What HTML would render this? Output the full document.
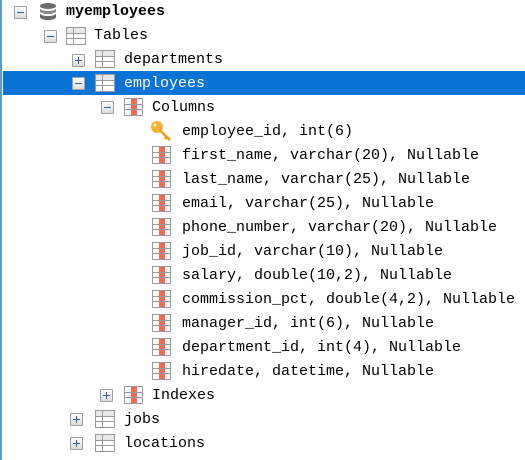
<!DOCTYPE html>
<html><head><meta charset="utf-8"><style>
body{margin:0;width:525px;height:460px;background:#fff;position:relative;overflow:hidden;font-family:"Liberation Mono",monospace;font-size:15px;color:#000}
.bar{position:absolute;left:0;top:0;width:2px;height:460px;background:#5b9bd5}
.sel{position:absolute;left:3px;top:71px;width:522px;height:24px;background:#0a74d6}
.r{position:absolute;height:24px;line-height:24px;white-space:pre}
.t{position:absolute;width:13px;height:13px;border:1px solid #a0a0a0;background:linear-gradient(#fdfdfd,#dcdcdc);box-sizing:border-box;border-radius:1px}
.t:before{content:"";position:absolute;left:2px;top:5px;width:7px;height:1px;background:#3c5a9a}
.t.p:after{content:"";position:absolute;left:5px;top:2px;width:1px;height:7px;background:#3c5a9a}
.tb{position:absolute;width:20px;height:18px;border:1px solid #9a9a9a;box-sizing:border-box;background:
linear-gradient(#9a9a9a,#9a9a9a) 0 5px/100% 1px no-repeat,
linear-gradient(#9a9a9a,#9a9a9a) 0 10px/100% 1px no-repeat,
linear-gradient(#9a9a9a,#9a9a9a) 6px 0/1px 100% no-repeat,
linear-gradient(#e8e8e8,#e8e8e8) 0 0/100% 5px no-repeat,#fff}
.cl{position:absolute;width:19px;height:18px;border:1px solid #9a9a9a;box-sizing:border-box;background:
linear-gradient(#9a9a9a,#9a9a9a) 0 5px/100% 1px no-repeat,
linear-gradient(#9a9a9a,#9a9a9a) 0 10px/100% 1px no-repeat,
linear-gradient(#f06a5a,#f06a5a) 6px 0/6px 100% no-repeat,#fff}
</style></head><body>
<div class="bar"></div>
<div class="sel"></div>
<div class="t" style="left:14px;top:6px"></div>
<svg style="position:absolute;left:38px;top:2px" width="20" height="20" viewBox="0 0 20 20"><ellipse cx="10" cy="4" rx="8" ry="3" fill="#6a6a6a"/><path d="M2 6c0 4 16 4 16 0v3c0 4-16 4-16 0z" fill="#8a8a8a"/><path d="M2 11c0 4 16 4 16 0v4c0 4-16 4-16 0z" fill="#6a6a6a"/></svg>
<div class="r" style="left:66px;top:0;font-weight:bold">myemployees</div>
<div class="t" style="left:44px;top:30px"></div><div class="tb" style="left:66px;top:27px"></div>
<div class="r" style="left:94px;top:24px">Tables</div>
<div class="t p" style="left:72px;top:54px"></div><div class="tb" style="left:95px;top:50px"></div>
<div class="r" style="left:124px;top:48px">departments</div>
<div class="t" style="left:72px;top:77px"></div><div class="tb" style="left:95px;top:74px"></div>
<div class="r" style="left:124px;top:72px;color:#fff">employees</div>
<div class="t" style="left:101px;top:101px"></div><div class="cl" style="left:124px;top:98px"></div>
<div class="r" style="left:152px;top:96px">Columns</div>
<svg style="position:absolute;left:150px;top:120px" width="24" height="22" viewBox="0 0 24 22"><circle cx="7" cy="7" r="6" fill="#f2b233"/><circle cx="5" cy="5" r="1.5" fill="#fff3c0"/><path d="M10 9l11 10-2 2-2-2-1 1-2-2 1-1-6-6z" fill="#e8a020"/></svg>
<div class="r" style="left:182px;top:120px">employee_id, int(6)</div>
<div class="cl" style="left:152px;top:146px"></div><div class="r" style="left:182px;top:144px">first_name, varchar(20), Nullable</div>
<div class="cl" style="left:152px;top:170px"></div><div class="r" style="left:182px;top:168px">last_name, varchar(25), Nullable</div>
<div class="cl" style="left:152px;top:194px"></div><div class="r" style="left:182px;top:192px">email, varchar(25), Nullable</div>
<div class="cl" style="left:152px;top:218px"></div><div class="r" style="left:182px;top:216px">phone_number, varchar(20), Nullable</div>
<div class="cl" style="left:152px;top:242px"></div><div class="r" style="left:182px;top:240px">job_id, varchar(10), Nullable</div>
<div class="cl" style="left:152px;top:266px"></div><div class="r" style="left:182px;top:264px">salary, double(10,2), Nullable</div>
<div class="cl" style="left:152px;top:290px"></div><div class="r" style="left:182px;top:288px">commission_pct, double(4,2), Nullable</div>
<div class="cl" style="left:152px;top:314px"></div><div class="r" style="left:182px;top:312px">manager_id, int(6), Nullable</div>
<div class="cl" style="left:152px;top:338px"></div><div class="r" style="left:182px;top:336px">department_id, int(4), Nullable</div>
<div class="cl" style="left:152px;top:362px"></div><div class="r" style="left:182px;top:360px">hiredate, datetime, Nullable</div>
<div class="t p" style="left:100px;top:389px"></div><div class="cl" style="left:124px;top:386px"></div>
<div class="r" style="left:152px;top:384px">Indexes</div>
<div class="t p" style="left:70px;top:413px"></div><div class="tb" style="left:95px;top:410px"></div>
<div class="r" style="left:124px;top:408px">jobs</div>
<div class="t p" style="left:70px;top:437px"></div><div class="tb" style="left:95px;top:434px"></div>
<div class="r" style="left:124px;top:432px">locations</div>
</body></html>
